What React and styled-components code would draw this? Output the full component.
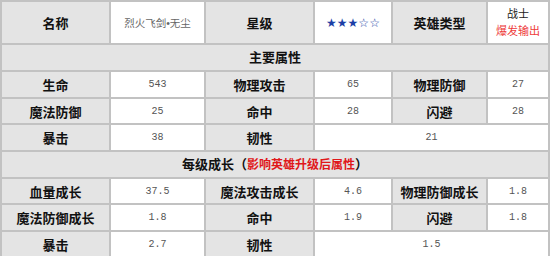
import React from "react"
import styled, { createGlobalStyle } from "styled-components"

const GlobalStyle = createGlobalStyle`
  html, body {
    margin: 0;
    padding: 0;
    background: #fff;
    overflow: hidden;
  }
  body {
    font-family: "Noto Sans CJK SC", "Liberation Sans", sans-serif;
  }
`

const Table = styled.div`
  display: grid;
  grid-template-columns: 107px 93px 107px 76px 93px 60px;
  grid-template-rows: 41px 25px 25px 24px 25px 25px 24px 25px 25px;
  gap: 2px;
  padding: 2px;
  width: 550px;
  box-sizing: border-box;
  background: #c2c2c2;
`

const Cell = styled.div`
  display: flex;
  flex-direction: column;
  align-items: center;
  justify-content: center;
  grid-column: span ${(p) => p.$span || 1};
  background: ${(p) => (p.$light ? "#fff" : "#e4e4e4")};
  overflow: hidden;
  white-space: nowrap;
`

const Label = styled(Cell)`
  font-size: 13px;
  font-weight: 700;
  color: #111;
`

const Value = styled(Cell).attrs({ $light: true })`
  font-family: "Liberation Mono", "Noto Sans CJK SC", monospace;
  font-size: 10px;
  color: #555;
`

const Name = styled(Cell).attrs({ $light: true })`
  font-family: "Liberation Sans", "Noto Sans CJK SC", sans-serif;
  font-size: 10.5px;
  color: #666;
`

const Stars = styled(Cell).attrs({ $light: true })`
  font-family: "DejaVu Sans", sans-serif;
  font-size: 12px;
  color: #1c3fa6;
`

const Type = styled(Cell).attrs({ $light: true })`
  font-size: 11px;
  line-height: 17px;
  color: #222;
  padding-bottom: 2px;
`

const Red = styled.span`
  color: ${(p) => (p.$bold ? "#e0171a" : "#ee3b3b")};
  font-weight: ${(p) => (p.$bold ? 700 : 400)};
  font-size: ${(p) => (p.$bold ? "12px" : "inherit")};
`

const Section = styled(Cell).attrs({ $span: 6 })`
  flex-direction: row;
  align-items: baseline;
  padding-top: 2px;
  font-size: 13px;
  font-weight: 700;
  color: #111;
`

const basic = [
  [["生命", "543"], ["物理攻击", "65"], ["物理防御", "27"]],
  [["魔法防御", "25"], ["命中", "28"], ["闪避", "28"]],
]

const growth = [
  [["血量成长", "37.5"], ["魔法攻击成长", "4.6"], ["物理防御成长", "1.8"]],
  [["魔法防御成长", "1.8"], ["命中", "1.9"], ["闪避", "1.8"]],
]

const Rows = ({ rows }) =>
  rows.map((row) =>
    row.map(([k, v]) => (
      <React.Fragment key={k + v}>
        <Label>{k}</Label>
        <Value>{v}</Value>
      </React.Fragment>
    ))
  )

const App = () => (
  <>
    <GlobalStyle />
    <Table>
      <Label>名称</Label>
      <Name>烈火飞剑•无尘</Name>
      <Label>星级</Label>
      <Stars>★★★☆☆</Stars>
      <Label>英雄类型</Label>
      <Type>
        <span>战士</span>
        <Red>爆发输出</Red>
      </Type>

      <Section>主要属性</Section>
      <Rows rows={basic} />
      <Label>暴击</Label>
      <Value>38</Value>
      <Label>韧性</Label>
      <Value $span={3}>21</Value>

      <Section>
        每级成长（<Red $bold>影响英雄升级后属性</Red>）
      </Section>
      <Rows rows={growth} />
      <Label>暴击</Label>
      <Value>2.7</Value>
      <Label>韧性</Label>
      <Value $span={3}>1.5</Value>
    </Table>
  </>
)

export default App
